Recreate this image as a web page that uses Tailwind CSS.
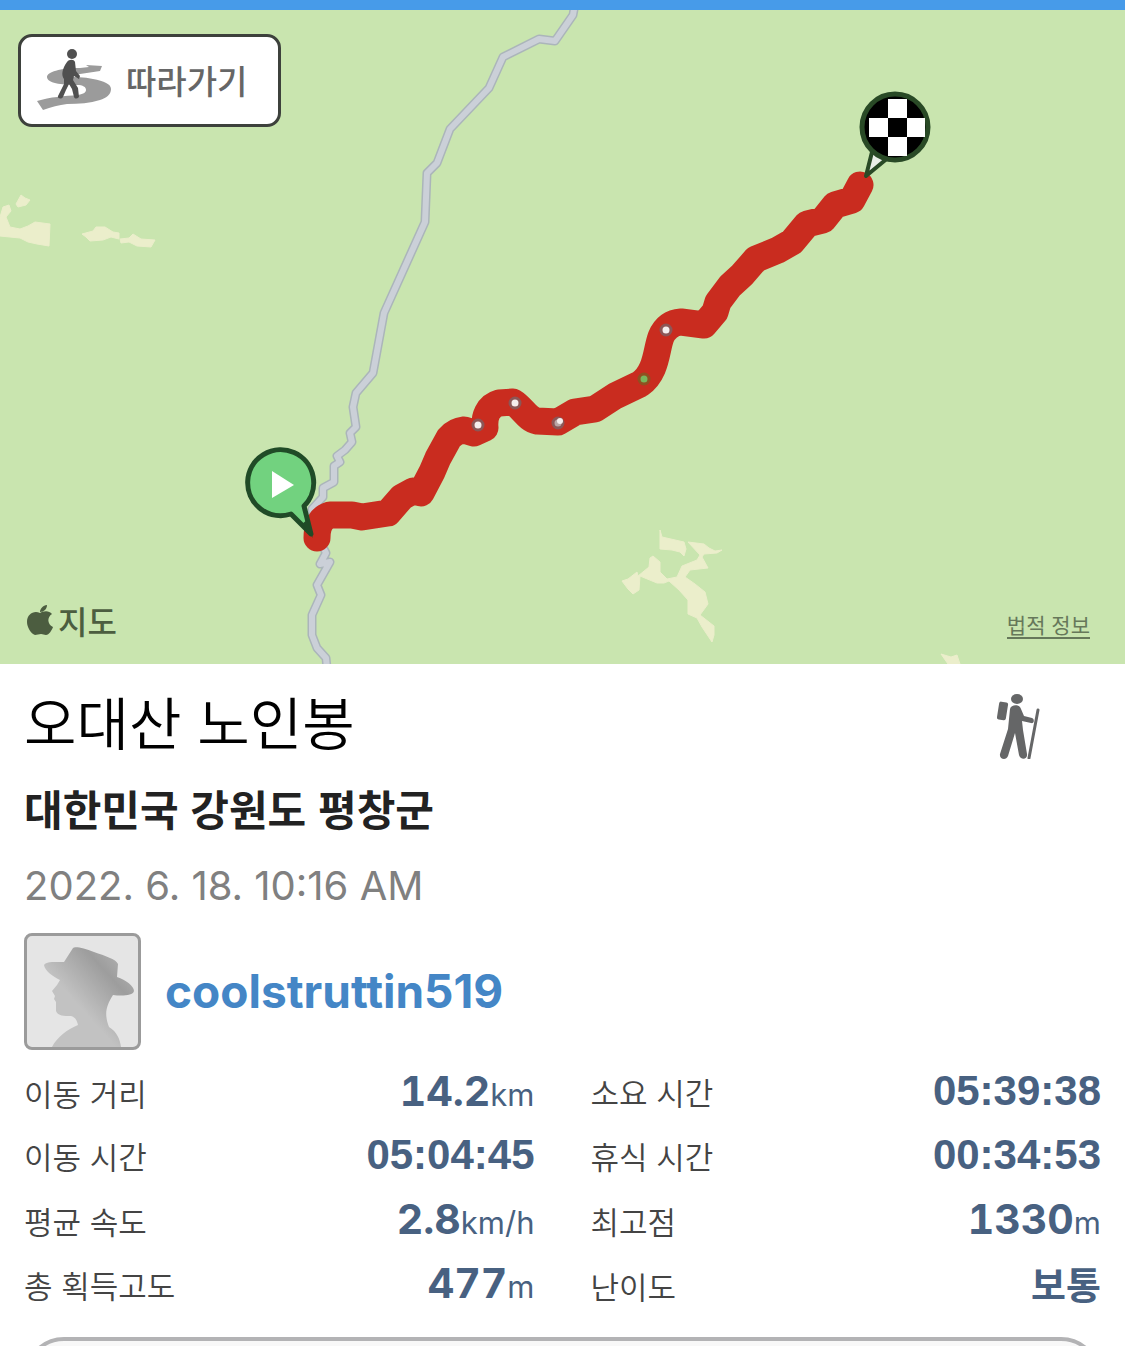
<!DOCTYPE html>
<html lang="ko">
  <head>
    <meta charset="UTF-8" />
    <meta name="viewport" content="width=device-width, initial-scale=1.0" />
    <title>오대산 노인봉</title>
    <script src="https://cdn.jsdelivr.net/npm/@tailwindcss/browser@4"></script>
  </head>

  <body class="h-screen overflow-hidden bg-white font-['Inter','Noto_Sans_CJK_KR',sans-serif]">
    <!-- Top bar -->
    <div class="h-[10px] bg-[#479be9]"></div>

    <!-- Map -->
    <section class="relative bg-[#c9e5af]" aria-label="지도">
      <svg class="block w-full" viewBox="0 10 1125 654" fill="none" stroke-linejoin="round">
        <!-- Clearings -->
        <g fill="#ebeecb" stroke="#ebeecb" stroke-width="1">
          <path d="M0 217L3 207 9 205 11 211 6 217 10 227 20 229 28 226 35 222 50 224 49 246 37 244 28 242 20 238 0 236zM16 204L21 195 25 198 30 200 26 205 18 207z" />
          <path d="M82 234l11-3 3-4 9 0 8 5 6 1 0 6-8-2-8 3-13 1-4-4zM120 239l9-1 4-4 8 5 14 1-4 7-14-1-8-4-8 1z" />
          <path d="M660 530L662 537 684 542 686 549 684 556 680 552 672 550 660 549z" />
          <path d="M688 542L704 544 709 548 715 551 722 550 717 553 704 554 702 557 708 568 690 570 685 577 695 584 705 592 708 604 700 615 714 626 714 635 712 642 702 627 697 618 688 614 688 600 679 590 669 581 664 583 657 583 640 576 639 590 633 594 628 589 622 581 628 579 637 572 638 576 649 567 650 558 653 556 660 562 660 572 667 579 677 577 682 566 697 560 700 555z" />
          <path d="M941 654l10 3 6-2 3 9h-12z" />
        </g>

        <!-- Road -->
        <g stroke-linecap="round">
          <path stroke="#abb5ba" stroke-width="9" d="M575 4L573 15 555 41 539 39 503 57 489 88 450 129 437 163 427 173 425 222 384 313 373 373 356 393 353 407 356 427 350 433 352 442 345 450 337 456 340 462 334 466 334 482 323 488 323 497 312 509 317 535 326 553 320 564 330 562 317 585 321 595 312 615 312 635 317 648 326 658 327 668" />
          <path stroke="#cbd0d8" stroke-width="6" d="M575 4L573 15 555 41 539 39 503 57 489 88 450 129 437 163 427 173 425 222 384 313 373 373 356 393 353 407 356 427 350 433 352 442 345 450 337 456 340 462 334 466 334 482 323 488 323 497 312 509 317 535 326 553 320 564 330 562 317 585 321 595 312 615 312 635 317 648 326 658 327 668" />
        </g>

        <!-- Trail -->
        <path stroke="#c92c1f" stroke-width="27" stroke-linecap="round" d="M317 538C317 527 320 518 330 515L352 515 362 517 388 513 402 497 413 491 421 493 432 472 438 458 449 438Q455 431 464 430L474 433 485 428C484 417 488 406 499 403L513 402C523 408 527 419 537 421L558 422 575 412 595 409 615 396 640 384C657 372 656 350 661 337Q667 323 681 322L704 325 715 312 718 302 730 286 742 275 756 259 778 250 792 242 807 224 823 220 835 205 852 200 860 185" />

        <!-- Waypoints -->
        <g fill="#f5eded" stroke="#8c5656" stroke-width="3">
          <circle cx="478" cy="425" r="5" />
          <circle cx="515" cy="403" r="5" />
          <circle cx="558" cy="423" r="5" fill="#b9a5a5" />
          <circle cx="560" cy="421" r="3" stroke="none" />
          <circle cx="666" cy="330" r="5" />
          <circle cx="644" cy="379" r="5" fill="#78b65c" stroke="#905020" />
        </g>

        <!-- Start pin -->
        <path d="M311 534L291 514A33 33 0 1 1 304 506z" fill="#72d27f" stroke="#204b27" stroke-width="5" />
        <path d="M313 538L302 524l5-4z" fill="#204b27" />
        <path d="M272 471v27l22-13z" fill="#fff" />

        <!-- Finish pin -->
        <path d="M866 176L872 152 889 157z" fill="#e9eee7" stroke="#294a26" stroke-width="4" />
        <circle cx="895" cy="127" r="33" fill="#000" stroke="#294a26" stroke-width="5" />
        <path d="M888 99h19v19h-19zM869 118h19v19h-19zM907 118h18v19h-18zM888 137h19v19h-19z" fill="#fff" />
      </svg>

      <button class="absolute left-[18px] top-6 flex h-[93px] items-center gap-[14px] rounded-[14px] border-3 border-[#3d413c] bg-white pl-[15px] pr-[31px] font-['Noto_Sans_CJK_KR',sans-serif] text-[33px] font-medium leading-none text-[#666]">
        <svg class="h-[64px] w-[76px]" viewBox="0 0 76 64" fill="none">
          <path d="M44 19l9-1-3-2 16 1-2 5-20 3-14 3c9 0 18 0 27 2 11 2 18 5 18 10 0 6-5 9-11 11-10 3-21 4-33 4-8 1-16 3-24 6L1 52c13-4 28-5 41-6 6-1 8-3 8-5 0-3-3-5-9-5-16 0-30-2-30-8 0-5 13-9 33-9z" fill="#9b9b9b" />
          <circle cx="36" cy="5" r="5" fill="#505050" />
          <path d="M31 13c2-3 7-3 8 0l1 9 4 5-1 3-5-3-1 4 5 8 1 9c-2 2-4 2-5 0l-2-8-3-5-3 6-3 7c-2 3-6 1-5-1l6-12 0-5c-3-4-2-10 3-17z" fill="#505050" />
        </svg>
        따라가기
      </button>

      <div class="absolute bottom-5 left-[27px] flex items-center gap-1 font-['Noto_Sans_CJK_KR',sans-serif] text-[32px] font-medium leading-[48px] text-[#4c5d40]">
        <svg class="h-[31px] w-[27px]" viewBox="0 0 27 31" fill="currentColor">
          <path d="M13 8c3-2 9-3 12 1-5 3-5 10 1 13-1 3-4 8-7 8-2 0-3-1-5-1s-4 1-6 1C4 29 0 22 0 17 0 9 7 5 13 8zM13 7c0-3 3-7 7-7 0 4-3 7-7 7z" />
        </svg>
        지도
      </div>

      <a href="#legal" class="absolute bottom-[25px] right-[35px] border-b-2 border-[#66785a] font-['Noto_Sans_CJK_KR',sans-serif] text-[21px] leading-[26px] text-[#66785a]">법적 정보</a>
    </section>

    <main class="px-6 pt-[18px]">
      <!-- Trail heading -->
      <header class="flex items-start justify-between font-['Noto_Sans_CJK_KR',sans-serif]">
        <div>
          <h1 class="text-[57px] font-[350] leading-[76px] text-black">오대산 노인봉</h1>
          <h2 class="mt-[18px] text-[42px] font-bold leading-[64px] text-[#222]">대한민국 강원도 평창군</h2>
        </div>
        <svg class="mr-[60px] mt-[11px] h-[66px] w-[44px]" viewBox="0 0 44 66" fill="#656667" role="img" aria-label="등산">
          <ellipse cx="20" cy="6" rx="6" ry="5" />
          <rect x="1" y="9" width="9" height="18" rx="2" transform="rotate(9 6 18)" />
          <path d="M13 16c1-5 10-5 11 0l3 7 8 2c3 1 2 6-1 5l-9-2 1 9 4 24c1 6-7 6-8 1l-4-22-7 23c-2 5-9 3-8-2l8-25z" />
          <path d="M41 17L32 65" stroke="#656667" stroke-width="3" stroke-linecap="round" />
        </svg>
      </header>

      <p class="mt-4 text-[40px] leading-[60px] text-[#808080]">2022. 6. 18. 10:16 AM</p>

      <!-- Author -->
      <a href="#coolstruttin519" class="mt-[17px] flex items-center gap-6 text-[46px] font-bold text-[#4486c6]">
        <svg class="size-[117px] rounded-lg border-3 border-[#9b9b9b] bg-[#e5e5e5]" viewBox="0 0 111 111">
          <defs>
            <linearGradient id="shade" x1="0" y1="1" x2="1" y2="0">
              <stop offset=".4" stop-color="#c2c2c2" />
              <stop offset=".72" stop-color="#9d9d9d" />
              <stop offset="1" stop-color="#bdbdbd" />
            </linearGradient>
          </defs>
          <path d="M46 12c2-2 11 0 21 4 11 4 22 7 24 12l-1 13c9 3 17 9 17 14-1 5-13 5-21 4-7 11-9 19-4 32 8 5 11 12 12 20H25c5-10 16-18 26-22-1-5-3-8-7-9-7 0-13 0-15-5l0-9-2-3 1-3-3-5 5-6 3-5c-8-4-15-9-16-15 2-4 12-3 20-3z" fill="url(#shade)" />
        </svg>
        coolstruttin519
      </a>

      <!-- Stats -->
      <dl class="mt-[9px] grid grid-cols-2 gap-x-14 text-[31px] text-[#486181]">
        <div class="flex h-16 items-baseline justify-between leading-[64px]">
          <dt class="font-['Noto_Sans_CJK_KR',sans-serif] font-[350] text-[#444]">이동 거리</dt>
          <dd><b class="text-[41px] font-bold tabular-nums">14.2</b>km</dd>
        </div>
        <div class="flex h-16 items-baseline justify-between leading-[64px]">
          <dt class="font-['Noto_Sans_CJK_KR',sans-serif] font-[350] text-[#444]">소요 시간</dt>
          <dd class="font-['Liberation_Sans',sans-serif] text-[42px] font-bold">05:39:38</dd>
        </div>
        <div class="flex h-16 items-baseline justify-between leading-[64px]">
          <dt class="font-['Noto_Sans_CJK_KR',sans-serif] font-[350] text-[#444]">이동 시간</dt>
          <dd class="font-['Liberation_Sans',sans-serif] text-[42px] font-bold">05:04:45</dd>
        </div>
        <div class="flex h-16 items-baseline justify-between leading-[64px]">
          <dt class="font-['Noto_Sans_CJK_KR',sans-serif] font-[350] text-[#444]">휴식 시간</dt>
          <dd class="font-['Liberation_Sans',sans-serif] text-[42px] font-bold">00:34:53</dd>
        </div>
        <div class="flex h-16 items-baseline justify-between leading-[64px]">
          <dt class="font-['Noto_Sans_CJK_KR',sans-serif] font-[350] text-[#444]">평균 속도</dt>
          <dd><b class="text-[41px] font-bold tabular-nums">2.8</b>km/h</dd>
        </div>
        <div class="flex h-16 items-baseline justify-between leading-[64px]">
          <dt class="font-['Noto_Sans_CJK_KR',sans-serif] font-[350] text-[#444]">최고점</dt>
          <dd><b class="text-[41px] font-bold tabular-nums">1330</b>m</dd>
        </div>
        <div class="flex h-16 items-baseline justify-between leading-[64px]">
          <dt class="font-['Noto_Sans_CJK_KR',sans-serif] font-[350] text-[#444]">총 획득고도</dt>
          <dd><b class="text-[41px] font-bold tabular-nums">477</b>m</dd>
        </div>
        <div class="flex h-16 items-baseline justify-between leading-[64px]">
          <dt class="font-['Noto_Sans_CJK_KR',sans-serif] font-[350] text-[#444]">난이도</dt>
          <dd class="font-['Noto_Sans_CJK_KR',sans-serif] text-[38px] font-bold">보통</dd>
        </div>
      </dl>

      <!-- Next panel, continues below the fold -->
      <div class="mt-[22px] h-24 rounded-[40px] border-4 border-[#b3b3b5] bg-[#f8f8f8]"></div>
    </main>
  </body>
</html>
